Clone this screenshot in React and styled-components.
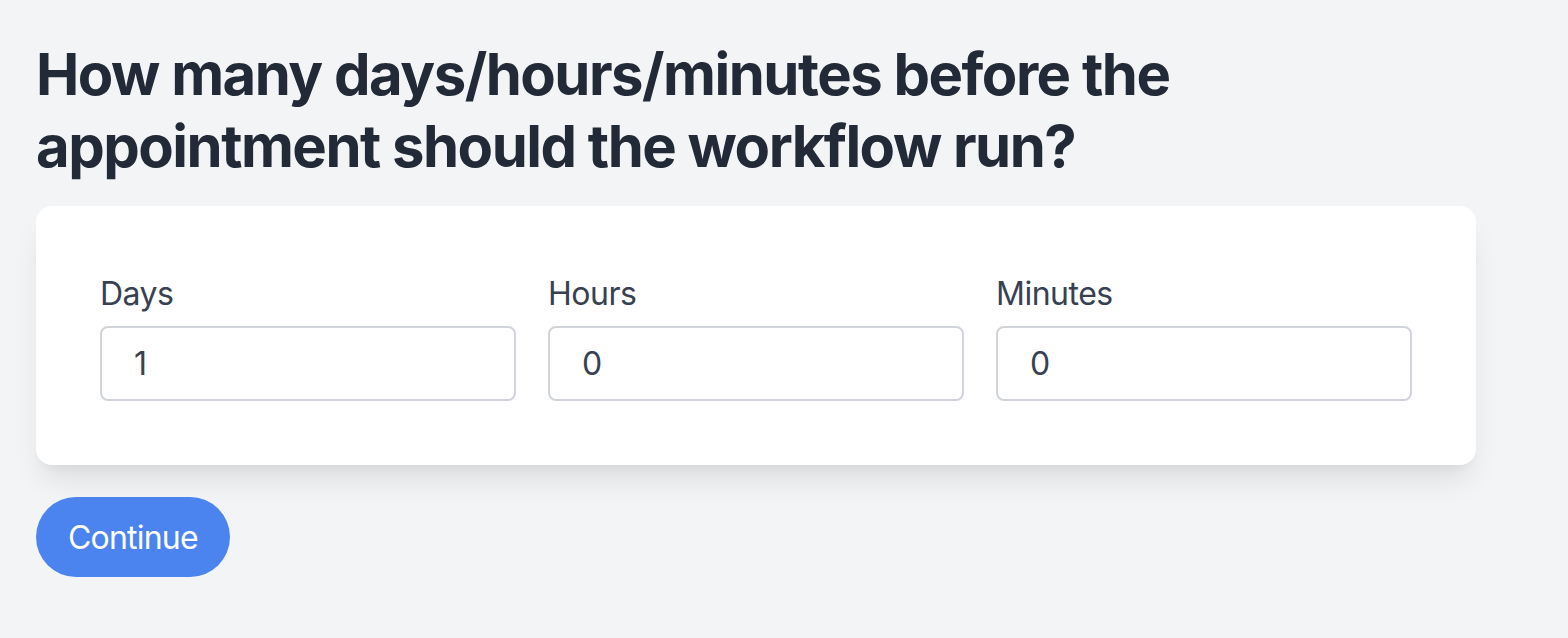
import { useState } from "react";
import styled, { createGlobalStyle } from "styled-components";

const fields = [
  { id: "days", label: "Days", value: "1" },
  { id: "hours", label: "Hours", value: "0" },
  { id: "minutes", label: "Minutes", value: "0" },
];

const App = () => {
  const [values, setValues] = useState(
    Object.fromEntries(fields.map(({ id, value }) => [id, value]))
  );

  return (
    <>
      <GlobalStyle />
      <Page>
        <Title>
          How many days/hours/minutes before the appointment should the
          workflow run?
        </Title>
        <Card>
          <FieldsGrid>
            {fields.map(({ id, label }) => (
              <Field key={id}>
                <Label htmlFor={id}>{label}</Label>
                <Input
                  id={id}
                  value={values[id]}
                  onChange={(e) => setValues({ ...values, [id]: e.target.value })}
                />
              </Field>
            ))}
          </FieldsGrid>
        </Card>
        <ContinueButton type="button">Continue</ContinueButton>
      </Page>
    </>
  );
};

export default App;

const GlobalStyle = createGlobalStyle`
  * {
    box-sizing: border-box;
  }

  body {
    margin: 0;
    background-color: #f3f4f6;
    font-family: Inter, "Noto Sans", "Liberation Sans", sans-serif;
  }
`;

const Page = styled.div`
  min-height: 638px;
  padding: 38px 36px 36px;
  width: 1512px;
`;

const Title = styled.h1`
  margin: 0 0 24px;
  font-size: 58px;
  line-height: 72px;
  font-weight: 700;
  color: #222a37;
  letter-spacing: -1.5px;
`;

const Card = styled.div`
  width: 1440px;
  padding: 64px;
  background-color: #ffffff;
  border-radius: 16px;
  box-shadow: 0 20px 30px -6px rgba(0, 0, 0, 0.09),
    0 8px 12px -6px rgba(0, 0, 0, 0.06);
`;

const FieldsGrid = styled.div`
  display: grid;
  grid-template-columns: repeat(3, minmax(0, 1fr));
  column-gap: 32px;
`;

const Field = styled.div`
  display: flex;
  flex-direction: column;
  row-gap: 8px;
  min-width: 0;
`;

const Label = styled.label`
  font-size: 32px;
  line-height: 48px;
  color: #374151;
  letter-spacing: -0.5px;
`;

const Input = styled.input`
  width: 100%;
  min-width: 0;
  height: 75px;
  padding: 0 32px;
  border: 2px solid #d1d5db;
  border-radius: 8px;
  font-family: inherit;
  font-size: 32px;
  color: #374151;
  background: #ffffff;
  outline: none;
`;

const ContinueButton = styled.button`
  margin-top: 32px;
  height: 80px;
  padding: 0 32px;
  border: none;
  border-radius: 40px;
  background-color: #4b84ee;
  color: #ffffff;
  font-family: inherit;
  font-size: 32px;
  letter-spacing: -0.8px;
  cursor: pointer;
`;
